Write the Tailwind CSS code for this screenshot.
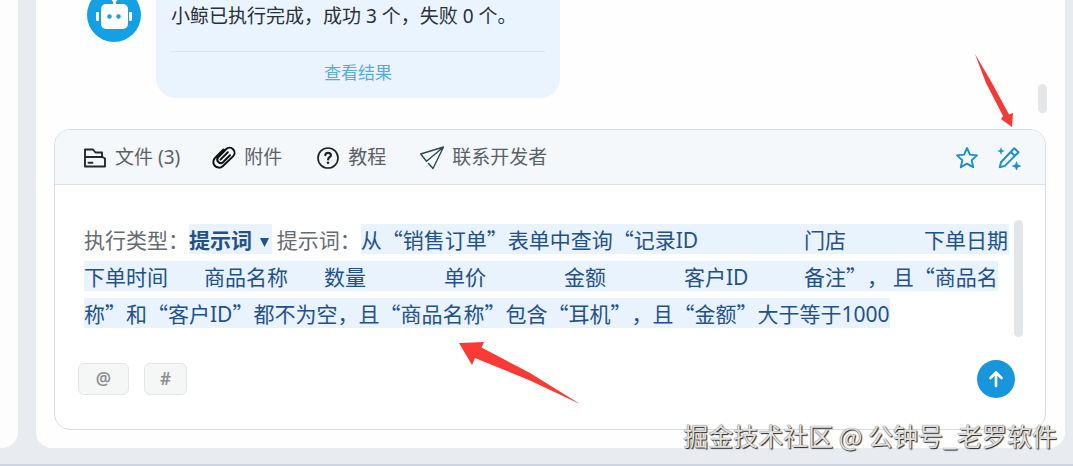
<!DOCTYPE html>
<html lang="zh-CN">
<head>
    <meta charset="UTF-8">
    <meta name="viewport" content="width=device-width, initial-scale=1.0">
    <title>小鲸助手</title>
    <script src="https://cdn.jsdelivr.net/npm/@tailwindcss/browser@4"></script>
    <style> body { font-family: 'Noto Sans', 'Noto Sans CJK SC', sans-serif; } </style>
</head>
<body class="relative h-screen flex flex-col overflow-hidden bg-[#e8ecf1] border-b-2 border-[#ccd5e0]">
    <div class="flex-1 min-h-0 flex gap-[18px] pr-2 pb-4">
        <aside class="w-[18px] shrink-0 bg-[#fdfdfe] rounded-br-2xl"></aside>

        <main class="flex-1 min-w-0 flex flex-col bg-[#fefefe] rounded-b-2xl pl-[18px] pr-[18px] pb-[18px]">
            <!-- Chat history -->
            <section class="relative h-[129px] shrink-0 overflow-hidden flex items-start gap-[15px] pl-[33px]">
                <div class="-mt-3 size-[54px] shrink-0 rounded-full bg-[#15a0e6] flex items-center justify-center">
                    <svg class="size-[54px]" viewBox="0 0 54 54" fill="#fff">
                        <circle cx="27.500" cy="11" r="3"/>
                        <rect x="26" y="12" width="3" height="6"/>
                        <rect x="14" y="16" width="27" height="25" rx="5"/>
                        <rect x="9" y="24" width="3" height="9" rx="1"/>
                        <rect x="42" y="24" width="3" height="9" rx="1"/>
                        <circle cx="22.500" cy="28.500" r="2.200" fill="#15a0e6"/>
                        <circle cx="31.500" cy="28.500" r="2.200" fill="#15a0e6"/>
                    </svg>
                </div>
                <div class="w-[404px] h-[98px] bg-[#eaf4fe] rounded-b-[20px] px-[15px]">
                    <p class="h-[51px] pt-0.5 text-[19px] leading-7 text-[#2b2f36] whitespace-nowrap">小鲸已执行完成，成功 3 个，失败 0 个。</p>
                    <div class="border-t border-[#dce6f1] pt-[7px] text-center">
                        <a href="#" class="text-[17px] leading-7 text-[#56abe6]">查看结果</a>
                    </div>
                </div>
                <div class="absolute right-0 top-[84px] w-[9px] h-[29px] rounded-full bg-[#e4e6e8]"></div>
            </section>

            <!-- Composer -->
            <section class="flex-1 min-h-0 mr-px flex flex-col bg-white border border-[#d9dce0] rounded-2xl overflow-hidden">
                <div class="h-[55px] shrink-0 flex items-center bg-[#f5f8fb] border-b border-[#dcdfe3] pt-px pl-7 pr-6 text-[19px] text-[#5c6066]">
                    <button type="button" class="flex items-center gap-2 whitespace-nowrap">
                        <svg class="size-6" viewBox="0 0 24 24" fill="none" stroke="#25282c" stroke-width="1.900" stroke-linejoin="round" stroke-linecap="round">
                            <path d="M2 20.500V3.500h8l2.500 3H19v4.500M2 11h17.500l2.500 1.500v8H2M5.500 16.800h4"/>
                        </svg>
                        文件 (3)
                    </button>
                    <button type="button" class="ml-8 flex items-center gap-2 whitespace-nowrap">
                        <svg class="size-6" viewBox="0 0 24 24" fill="none" stroke="#111" stroke-width="2" stroke-linecap="round" stroke-linejoin="round">
                            <path d="M11.500 3.500 3.200 11.800a5.300 5.300 0 0 0 7.500 8.400L21 10.400a5 5 0 0 0-7-7.200L6.200 11.400a3.400 3.400 0 0 0 4.800 4.800l7-7M15.800 6.300 8.500 13.600"/>
                        </svg>
                        附件
                    </button>
                    <button type="button" class="ml-[34px] flex items-center gap-2 whitespace-nowrap">
                        <svg class="size-6" viewBox="0 0 24 24" fill="none" stroke="#222" stroke-width="1.700" stroke-linecap="round">
                            <circle cx="12" cy="12" r="10"/>
                            <path d="M9.300 9.200c.2-1.700 1.400-2.400 2.800-2.400 1.600 0 2.800.9 2.800 2.400 0 1.900-2.800 2.100-2.800 4.300" stroke-width="2.200"/>
                            <circle cx="12" cy="16.800" r=".6" stroke-width="1.400" fill="#222"/>
                        </svg>
                        教程
                    </button>
                    <button type="button" class="ml-[34px] flex items-center gap-2 whitespace-nowrap">
                        <svg class="size-6" viewBox="0 0 24 24" fill="none" stroke="#2c4a50" stroke-width="1.400" stroke-linejoin="round" stroke-linecap="round">
                            <path d="M23.500 1 .700 8l5.800 7.300L23.500 1 13 22.500 8.500 17.500"/>
                        </svg>
                        联系开发者
                    </button>
                    <div class="ml-auto flex items-center gap-[18px]">
                        <button type="button" aria-label="收藏">
                            <svg class="size-6" viewBox="0 0 24 24" fill="none" stroke="#1b91cf" stroke-width="1.900" stroke-linejoin="round">
                                <path d="m12 2 2.900 6.600 7.100.8-5.300 4.800 1.500 7L12 17.700 5.800 21.200l1.500-7L2 9.400l7.100-.8z"/>
                            </svg>
                        </button>
                        <button type="button" aria-label="优化提示词">
                            <svg class="size-6" viewBox="0 0 24 24" fill="none" stroke="#1b91cf" stroke-width="2" stroke-linejoin="round">
                                <path d="M2.800 21.200 4 16.200 17.200 2.200l4.300 4L7.900 19.900zM13.700 6l4.300 4"/>
                                <path d="M4 1 5 4l3 1-3 1-1 3-1-3-3-1 3-1z" fill="#1b91cf" stroke="none"/>
                                <path d="m19.500 15 1.400 3.600 3.600 1.400-3.600 1.400-1.400 3.600-1.400-3.600-3.600-1.400 3.600-1.400z" fill="#1b91cf" stroke="none"/>
                            </svg>
                        </button>
                    </div>
                </div>

                <div class="flex-1 min-h-0 flex justify-between pl-[29px] pr-[22px] pt-[35px]">
                    <div contenteditable="true" spellcheck="false" class="flex-1 min-w-0 mr-[5px] pt-px h-[117px] overflow-hidden font-['Noto_Sans_CJK_SC'] text-[21px] leading-[37px] text-[#666b73] whitespace-pre-wrap [tab-size:120px] [text-spacing-trim:space-all] outline-none">执行类型：<span class="bg-[#e8f3fe] text-[#24508a]"><span class="font-bold">提示词</span><svg class="inline-block w-5 h-4 align-middle" viewBox="0 0 20 16"><path d="M8 4h9l-4.500 9z" fill="#24508a"/></svg></span> 提示词：<span class="bg-[#e8f3fe] text-[#24508a]">从“销售订单”表单中查询“记录<span class="font-['Noto_Sans'] leading-none">ID</span>&#9;门店&#9;下单日期&#9;下单时间&#9;商品名称&#9;数量&#9;单价&#9;金额&#9;客户<span class="font-['Noto_Sans'] leading-none">ID</span>&#9;备注”， 且“商品名称”和“客户<span class="font-['Noto_Sans'] leading-none">ID</span>”都不为空，且“商品名称”包含“耳机”，且“金额”大于等于<span class="font-['Noto_Sans'] leading-none">1000</span></span></div>
                    <div class="w-[9px] h-[117px] rounded-full bg-[#e3e6e8]"></div>
                </div>

                <div class="shrink-0 flex items-center pl-[23px] pr-[30px] pb-[31px]">
                    <button type="button" class="w-[51px] h-8 rounded-md border border-[#e3e5e7] bg-[#f5f6f6] text-[17px] font-semibold text-[#8b8e92]">@</button>
                    <button type="button" class="ml-[15px] w-[43px] h-8 rounded-md border border-[#e3e5e7] bg-[#f5f6f6] text-[17px] font-semibold text-[#8b8e92]">#</button>
                    <button type="button" aria-label="发送" class="ml-auto size-[38px] rounded-full bg-[#1796db] flex items-center justify-center">
                        <svg class="size-5" viewBox="0 0 20 20" fill="none" stroke="#fff" stroke-width="2.600" stroke-linecap="round" stroke-linejoin="round">
                            <path d="M10 17V4M4.500 9 10 3.500 15.500 9"/>
                        </svg>
                    </button>
                </div>
            </section>
        </main>
    </div>

    <!-- Annotation arrows -->
    <svg class="absolute right-[58px] top-[54px] w-[41px] h-[74px]" viewBox="0 0 41 74" fill="#f43a36">
        <path d="M1 0 18 29 35 60.500l4-1.500-1 14-11-8 2-3L12 29z"/>
    </svg>
    <svg class="absolute left-[459px] top-[341px] w-[121px] h-[64px]" viewBox="0 0 121 64" fill="#fb3a36">
        <path d="M0 2 25 1l-2.500 5.500L71 32l50 31-50-23.500L16 17l-3 7z"/>
    </svg>

    <!-- Watermark -->
    <div class="absolute right-4 bottom-[11px] font-['Noto_Sans_CJK_SC'] text-[25px] leading-9 whitespace-nowrap text-[#e2e2e2] [text-shadow:1px_1px_1px_#222,0_0_1px_#444]">掘金技术社区 @ 公钟号_老罗软件</div>
</body>
</html>
